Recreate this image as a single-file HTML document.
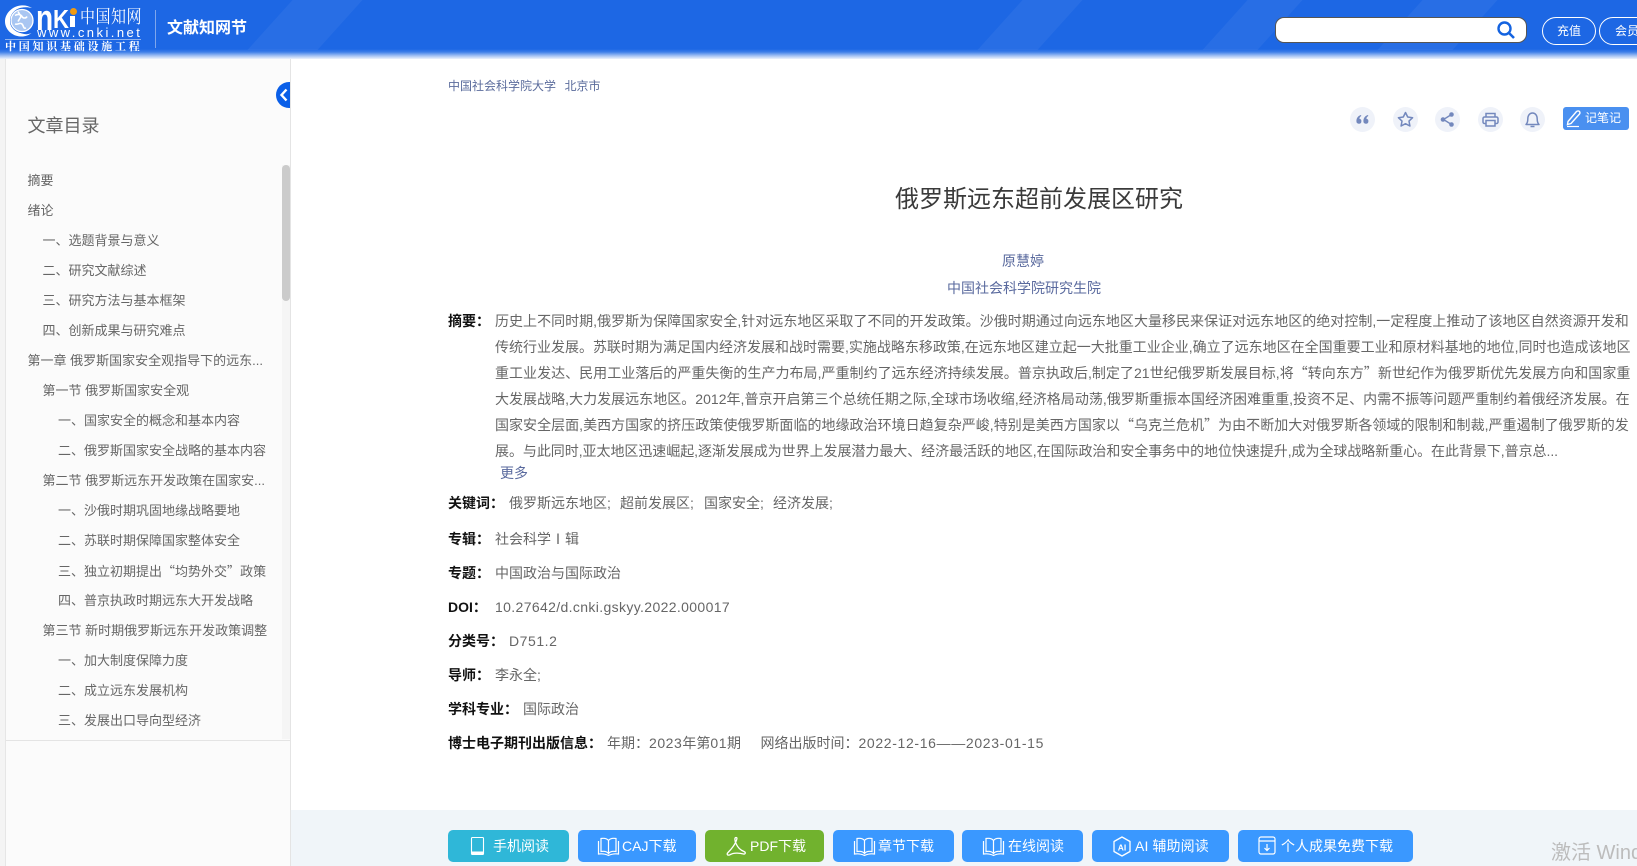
<!DOCTYPE html>
<html lang="zh-CN">
<head>
<meta charset="utf-8">
<title>俄罗斯远东超前发展区研究</title>
<style>
*{margin:0;padding:0;box-sizing:border-box}
html,body{width:1637px;height:866px;overflow:hidden;background:#fff}
body{position:relative;font-family:"Liberation Sans","Noto Sans CJK SC",sans-serif;font-size:14px;color:#666}
.a{position:absolute;white-space:nowrap}
.q{font-family:"Noto Sans CJK SC",sans-serif}
#hdr{position:absolute;left:0;top:0;width:1637px;height:59px;overflow:hidden;background:linear-gradient(to bottom,#1d67e4 0,#1d67e4 49px,#3f7fe9 52px,#a9c5f4 56px,#eef3fc 59px)}
.stripe{position:absolute;top:0;height:50px;background:rgba(255,255,255,.05);transform:skewX(-42deg)}
#side{position:absolute;left:5px;top:59px;width:286px;height:807px;background:#fbfbfb;border-right:1px solid #e4e4e4;border-left:1px solid #e6e6e6}
#strip{position:absolute;left:0;top:59px;width:5px;height:807px;background:#f4f4f4}
.t{position:absolute;height:20px;line-height:20px;font-size:13px;color:#666;white-space:nowrap}
.l1{left:27.5px}.l2{left:42.5px}.l3{left:58px}
.ab{position:absolute;left:495px;height:20px;line-height:20px;font-size:14px;color:#666;white-space:nowrap}
.lb{position:absolute;left:448px;height:20px;line-height:20px;font-size:14px;color:#111;font-weight:700;white-space:nowrap}
.v{position:absolute;height:20px;line-height:20px;font-size:14px;color:#666;white-space:nowrap}
.d{letter-spacing:.55px}
.ci{position:absolute;top:107px;width:25px;height:25px;border-radius:50%;background:#eff2f9}
.ci svg{position:absolute;left:0;top:0}
.btn{position:absolute;top:830px;height:32px;border-radius:5px;background:#3a98ff}
.bt{position:absolute;top:830px;height:32px;line-height:32px;color:#fff;font-size:14px;white-space:nowrap}
.bi{position:absolute;top:830px}
</style>
</head>
<body>
<div id="hdr">
  <div class="stripe" style="left:270px;width:70px"></div>
  <div class="stripe" style="left:1000px;width:60px"></div>
  <div class="stripe" style="left:1225px;width:55px"></div>
  <div class="stripe" style="left:1400px;width:75px"></div>
</div>

<!-- logo -->
<svg class="a" style="left:4px;top:4px" width="34" height="34" viewBox="0 0 34 34">
  <path d="M28 4C24 1.500 20 1 16.500 1.500 8 2.500 1 9.500 1 17.500S8 32 16.500 32.500c4 .3 8-1 11-3.500-3 1.500-6.500 1.500-9.500.5C11 28 6 23.500 6 17 6 10 11 5 17 3.700c4-.8 8-.5 11 .3z" fill="#fff"/>
  <circle cx="18" cy="16.500" r="11" fill="#a9c6f2" stroke="#fff" stroke-width="1.300"/>
  <path d="M11 11.500c3-2 6-1 7 1s4 2 5 0M11 20c3 1 5-2 7 0s1 5 4 4M14 7.500l3 5-3 5" fill="none" stroke="#fff" stroke-width="1.600"/>
</svg>
<div class="a" style="left:36px;top:2px;font-size:36px;line-height:32px;font-weight:700;color:#fff;font-family:'Liberation Sans',sans-serif;transform:scaleX(.78);transform-origin:left">n</div>
<div class="a" style="left:53px;top:6px;font-size:26px;line-height:26px;font-weight:700;color:#fff;font-family:'Liberation Sans',sans-serif;transform:scaleX(.85);transform-origin:left">K</div>
<div class="a" style="left:70px;top:16px;width:5px;height:11px;background:#fff"></div>
<div class="a" style="left:70px;top:8px;width:7px;height:7px;border-radius:50%;background:#f09a12"></div>
<div class="a" style="left:80px;top:4px;font-size:15px;line-height:22px;color:#fff;letter-spacing:.5px;font-family:'Noto Serif CJK SC',serif;transform:scaleY(1.2);transform-origin:top">中国知网</div>
<div class="a" style="left:37px;top:26px;font-size:13px;line-height:13px;color:#fff;letter-spacing:2.45px;font-family:'Liberation Sans',sans-serif">www.cnki.net</div>
<div class="a" style="left:5px;top:39px;width:136px;height:1px;background:#8fb3ef"></div>
<div class="a" style="left:5px;top:40px;font-size:11px;line-height:13px;color:#fff;font-weight:700;letter-spacing:2.75px;font-family:'Noto Serif CJK SC',serif">中国知识基础设施工程</div>
<div class="a" style="left:155px;top:10px;width:1px;height:38px;background:#7fa6ec"></div>
<div class="a" style="left:167px;top:17px;font-size:16px;line-height:24px;font-weight:700;color:#fff">文献知网节</div>

<!-- search -->
<div class="a" style="left:1275px;top:17px;width:252px;height:26px;background:#fff;border:1px solid #555;border-radius:9px"></div>
<svg class="a" style="left:1496px;top:20px" width="20" height="20" viewBox="0 0 20 20"><circle cx="8.5" cy="8.5" r="6" fill="none" stroke="#1463e0" stroke-width="2.4"/><path d="M13 13l5 5" stroke="#1463e0" stroke-width="2.6"/></svg>
<div class="a" style="left:1542px;top:17px;width:54px;height:28px;border:1px solid #fff;border-radius:14px;color:#fff;font-size:12px;line-height:26px;text-align:center">充值</div>
<div class="a" style="left:1599px;top:17px;width:60px;height:28px;border:1px solid #fff;border-radius:14px;color:#fff;font-size:12px;line-height:26px;padding-left:15px">会员</div>

<!-- sidebar -->
<div id="strip"></div>
<div id="side"></div>
<div class="a" style="left:282px;top:165px;width:8px;height:574px;background:#f5f5f5"></div>
<div class="a" style="left:282px;top:165px;width:8px;height:136px;background:#cbcbcb;border-radius:4px"></div>
<div class="a" style="left:6px;top:740px;width:284px;height:1px;background:#e4e4e4"></div>
<div class="a" style="left:276px;top:82px;width:14px;height:26px;background:#0a5fe8;border-radius:13px 0 0 13px"></div>
<svg class="a" style="left:278px;top:87px" width="12" height="16" viewBox="0 0 12 16"><path d="M8.5 2.5L3.5 8l5 5.5" fill="none" stroke="#fff" stroke-width="2.4"/></svg>
<div class="a" style="left:27.5px;top:113px;font-size:18px;line-height:26px;color:#666">文章目录</div>

<div class="t l1" style="top:171px">摘要</div>
<div class="t l1" style="top:201px">绪论</div>
<div class="t l2" style="top:231px">一、选题背景与意义</div>
<div class="t l2" style="top:261px">二、研究文献综述</div>
<div class="t l2" style="top:291px">三、研究方法与基本框架</div>
<div class="t l2" style="top:321px">四、创新成果与研究难点</div>
<div class="t l1" style="top:351px">第一章 俄罗斯国家安全观指导下的远东...</div>
<div class="t l2" style="top:381px">第一节 俄罗斯国家安全观</div>
<div class="t l3" style="top:411px">一、国家安全的概念和基本内容</div>
<div class="t l3" style="top:441px">二、俄罗斯国家安全战略的基本内容</div>
<div class="t l2" style="top:471px">第二节 俄罗斯远东开发政策在国家安...</div>
<div class="t l3" style="top:501px">一、沙俄时期巩固地缘战略要地</div>
<div class="t l3" style="top:531px">二、苏联时期保障国家整体安全</div>
<div class="t l3" style="top:561px">三、独立初期提出<span class="q">“</span>均势外交<span class="q">”</span>政策</div>
<div class="t l3" style="top:591px">四、普京执政时期远东大开发战略</div>
<div class="t l2" style="top:621px">第三节 新时期俄罗斯远东开发政策调整</div>
<div class="t l3" style="top:651px">一、加大制度保障力度</div>
<div class="t l3" style="top:681px">二、成立远东发展机构</div>
<div class="t l3" style="top:711px">三、发展出口导向型经济</div>

<!-- top of article -->
<div class="a" style="left:448px;top:77px;height:18px;line-height:18px;font-size:12px;color:#5b6c9c">中国社会科学院大学<span style="margin-left:8.5px">北京市</span></div>

<div class="ci" style="left:1350px"><svg width="25" height="25" viewBox="0 0 25 25"><path d="M11 8c-3 .8-4.600 3-4.600 6.300a2.500 2.500 0 1 0 3-2.500c.1-1.300.7-2.200 1.900-2.800zM18 8c-3 .8-4.600 3-4.600 6.300a2.500 2.500 0 1 0 3-2.500c.1-1.300.7-2.200 1.900-2.800z" fill="#7388bd"/></svg></div>
<div class="ci" style="left:1393px"><svg width="25" height="25" viewBox="0 0 25 25"><path d="M12.500 5.500l2.200 4.500 4.900.7-3.600 3.400.9 4.900-4.400-2.300-4.400 2.300.9-4.900-3.600-3.400 4.900-.7z" fill="none" stroke="#7388bd" stroke-width="1.500" stroke-linejoin="round"/></svg></div>
<div class="ci" style="left:1435px"><svg width="25" height="25" viewBox="0 0 25 25"><path d="M16.500 7.500l-8 5 8 5" fill="none" stroke="#7388bd" stroke-width="1.400"/><circle cx="16.500" cy="7.500" r="2.300" fill="#7388bd"/><circle cx="8" cy="12.500" r="2.300" fill="#7388bd"/><circle cx="16.500" cy="17.500" r="2.300" fill="#7388bd"/></svg></div>
<div class="ci" style="left:1478px"><svg width="25" height="25" viewBox="0 0 25 25"><path d="M8 10V6.500h9V10M8 16.500H6.500a1.500 1.500 0 0 1-1.500-1.500v-3.500A1.500 1.500 0 0 1 6.500 10h12a1.500 1.500 0 0 1 1.500 1.500V15a1.500 1.500 0 0 1-1.500 1.500H17M8 13.500h9v5.500H8z" fill="none" stroke="#7388bd" stroke-width="1.500"/></svg></div>
<div class="ci" style="left:1520px"><svg width="25" height="25" viewBox="0 0 25 25"><path d="M6 17.500h13c-1.500-1.500-1.800-3-1.800-5.500 0-3.500-1.800-6-4.700-6S7.800 8.500 7.800 12c0 2.500-.3 4-1.800 5.500zM10.500 19.500h4" fill="none" stroke="#7388bd" stroke-width="1.500" stroke-linejoin="round"/></svg></div>
<div class="a" style="left:1563px;top:107px;width:66px;height:23px;background:#4a90f0;border-radius:3px"></div>
<svg class="a" style="left:1565px;top:108px" width="18" height="20" viewBox="0 0 18 20"><path d="M3 13.500L11.500 3.500c.8-.8 2.500-.8 3 0s.6 1.800 0 2.500L6 15.500l-3.500 1z" fill="none" stroke="#fff" stroke-width="1.400"/><path d="M2 18.500h12" stroke="#fff" stroke-width="1.200"/></svg>
<div class="a" style="left:1585px;top:108px;height:21px;line-height:21px;font-size:12px;color:#fff">记笔记</div>

<div class="a" style="left:895px;top:182px;height:36px;line-height:36px;font-size:24px;color:#3a3a3a">俄罗斯远东超前发展区研究</div>
<div class="a" style="left:1002px;top:251px;height:20px;line-height:20px;font-size:14px;color:#5a6a9e">原慧婷</div>
<div class="a" style="left:947px;top:278px;height:20px;line-height:20px;font-size:14px;color:#5a6a9e">中国社会科学院研究生院</div>

<!-- abstract -->
<div class="lb" style="top:311px">摘要：</div>
<div class="ab" style="top:311px;letter-spacing:.025px">历史上不同时期,俄罗斯为保障国家安全,针对远东地区采取了不同的开发政策。沙俄时期通过向远东地区大量移民来保证对远东地区的绝对控制,一定程度上推动了该地区自然资源开发和</div>
<div class="ab" style="top:337px">传统行业发展。苏联时期为满足国内经济发展和战时需要,实施战略东移政策,在远东地区建立起一大批重工业企业,确立了远东地区在全国重要工业和原材料基地的地位,同时也造成该地区</div>
<div class="ab" style="top:363px;letter-spacing:.025px">重工业发达、民用工业落后的严重失衡的生产力布局,严重制约了远东经济持续发展。普京执政后,制定了21世纪俄罗斯发展目标,将<span class="q">“</span>转向东方<span class="q">”</span>新世纪作为俄罗斯优先发展方向和国家重</div>
<div class="ab" style="top:389px;letter-spacing:.025px">大发展战略,大力发展远东地区。2012年,普京开启第三个总统任期之际,全球市场收缩,经济格局动荡,俄罗斯重振本国经济困难重重,投资不足、内需不振等问题严重制约着俄经济发展。在</div>
<div class="ab" style="top:415px;letter-spacing:.025px">国家安全层面,美西方国家的挤压政策使俄罗斯面临的地缘政治环境日趋复杂严峻,特别是美西方国家以<span class="q">“</span>乌克兰危机<span class="q">”</span>为由不断加大对俄罗斯各领域的限制和制裁,严重遏制了俄罗斯的发</div>
<div class="ab" style="top:441px;letter-spacing:-.05px">展。与此同时,亚太地区迅速崛起,逐渐发展成为世界上发展潜力最大、经济最活跃的地区,在国际政治和安全事务中的地位快速提升,成为全球战略新重心。在此背景下,普京总...</div>
<div class="a" style="left:500px;top:463px;height:20px;line-height:20px;font-size:14px;color:#5a6a9e">更多</div>

<div class="lb" style="top:493px">关键词：</div>
<div class="v" style="top:493px;left:509px">俄罗斯远东地区;</div>
<div class="v" style="top:493px;left:620px">超前发展区;</div>
<div class="v" style="top:493px;left:704px">国家安全;</div>
<div class="v" style="top:493px;left:773px">经济发展;</div>

<div class="lb" style="top:529px">专辑：</div>
<div class="v" style="top:529px;left:495px">社会科学<span class="q">Ⅰ</span>辑</div>
<div class="lb" style="top:563px">专题：</div>
<div class="v" style="top:563px;left:495px">中国政治与国际政治</div>
<div class="lb" style="top:597px">DOI：</div>
<div class="v" style="top:597px;left:495px;letter-spacing:.36px">10.27642/d.cnki.gskyy.2022.000017</div>
<div class="lb" style="top:631px">分类号：</div>
<div class="v d" style="top:631px;left:509px">D751.2</div>
<div class="lb" style="top:665px">导师：</div>
<div class="v" style="top:665px;left:495px">李永全;</div>
<div class="lb" style="top:699px">学科专业：</div>
<div class="v" style="top:699px;left:523px">国际政治</div>
<div class="lb" style="top:733px">博士电子期刊出版信息：</div>
<div class="v" style="top:733px;left:607px">年期：<span class="d">2023</span>年第<span class="d">01</span>期</div>
<div class="v" style="top:733px;left:760.500px">网络出版时间：<span style="letter-spacing:.65px">2022-12-16——2023-01-15</span></div>

<!-- footer bar -->
<div class="a" style="left:291px;top:810px;width:1346px;height:56px;background:#f0f5f9"></div>

<div class="btn" style="left:448px;width:121px;background:#2fb7d8"></div>
<svg class="bi" style="left:470px" width="15" height="32" viewBox="0 0 15 32"><rect x="1.500" y="7.500" width="12" height="17" rx="1" fill="none" stroke="#fff" stroke-width="1.100"/><rect x="1.500" y="21.500" width="12" height="3" fill="#fff"/></svg>
<div class="bt" style="left:493px">手机阅读</div>

<div class="btn" style="left:578px;width:118px"></div>
<svg class="bi" style="left:597px" width="23" height="32" viewBox="0 0 23 32"><path d="M11.500 10.500C10 8.500 7 8 4 8.500v13c3-.5 6 0 7.500 2 1.500-2 4.500-2.500 7.500-2v-13c-3-.5-6 0-7.500 2zM11.500 10.500v13M1.500 11v13c3.500-.5 7 0 10 1.500 3-1.500 6.500-2 10-1.500V11" fill="none" stroke="#fff" stroke-width="1.200"/></svg>
<div class="bt" style="left:622px">CAJ下载</div>

<div class="btn" style="left:705px;width:119px;background:#71b22e"></div>
<svg class="bi" style="left:725px" width="22" height="32" viewBox="0 0 22 32"><path d="M11 7.500C9.500 7.500 9.500 10 11 13.500 12.500 17 15 20 19 21.500 21 22.300 20.500 24.500 18.500 24 14 22.800 8.500 22.800 5.500 24.500 3 26 1 24.500 3 22.500 6 19.500 9.500 15 11 11.500 12 9 12.500 7.500 11 7.500z" fill="none" stroke="#fff" stroke-width="1.300" stroke-linejoin="round"/></svg>
<div class="bt" style="left:750px">PDF下载</div>

<div class="btn" style="left:833px;width:121px"></div>
<svg class="bi" style="left:853px" width="23" height="32" viewBox="0 0 23 32"><path d="M11.500 10.500C10 8.500 7 8 4 8.500v13c3-.5 6 0 7.500 2 1.500-2 4.500-2.500 7.500-2v-13c-3-.5-6 0-7.500 2zM11.500 10.500v13M1.500 11v13c3.500-.5 7 0 10 1.500 3-1.500 6.500-2 10-1.500V11" fill="none" stroke="#fff" stroke-width="1.200"/></svg>
<div class="bt" style="left:878px">章节下载</div>

<div class="btn" style="left:962px;width:121px"></div>
<svg class="bi" style="left:982px" width="23" height="32" viewBox="0 0 23 32"><path d="M11.500 10.500C10 8.500 7 8 4 8.500v13c3-.5 6 0 7.500 2 1.500-2 4.500-2.500 7.500-2v-13c-3-.5-6 0-7.500 2zM11.500 10.500v13M1.500 11v13c3.500-.5 7 0 10 1.500 3-1.500 6.500-2 10-1.500V11" fill="none" stroke="#fff" stroke-width="1.200"/></svg>
<div class="bt" style="left:1008px">在线阅读</div>

<div class="btn" style="left:1092px;width:137px"></div>
<svg class="bi" style="left:1112px" width="20" height="32" viewBox="0 0 20 32"><path d="M10 7l8 4.500v10L10 26l-8-4.500v-10z" fill="none" stroke="#fff" stroke-width="1.300" stroke-linejoin="round"/><text x="10" y="20.500" text-anchor="middle" font-size="8.500" font-weight="700" fill="#fff" font-family="Liberation Sans,sans-serif">AI</text></svg>
<div class="bt" style="left:1135px;letter-spacing:.1px">AI 辅助阅读</div>

<div class="btn" style="left:1238px;width:175px"></div>
<svg class="bi" style="left:1258px" width="18" height="32" viewBox="0 0 18 32"><path d="M3 7h12a2 2 0 0 1 2 2v13a2 2 0 0 1-2 2H3a2 2 0 0 1-2-2V9a2 2 0 0 1 2-2zM1 11h16M9 14v6.500M6.500 18L9 20.500l2.500-2.500" fill="none" stroke="#fff" stroke-width="1.200"/></svg>
<div class="bt" style="left:1281px">个人成果免费下载</div>

<div class="a" style="left:1551px;top:839px;height:28px;line-height:28px;font-size:20px;color:#bcbcbc">激活 Windows</div>
</body>
</html>
